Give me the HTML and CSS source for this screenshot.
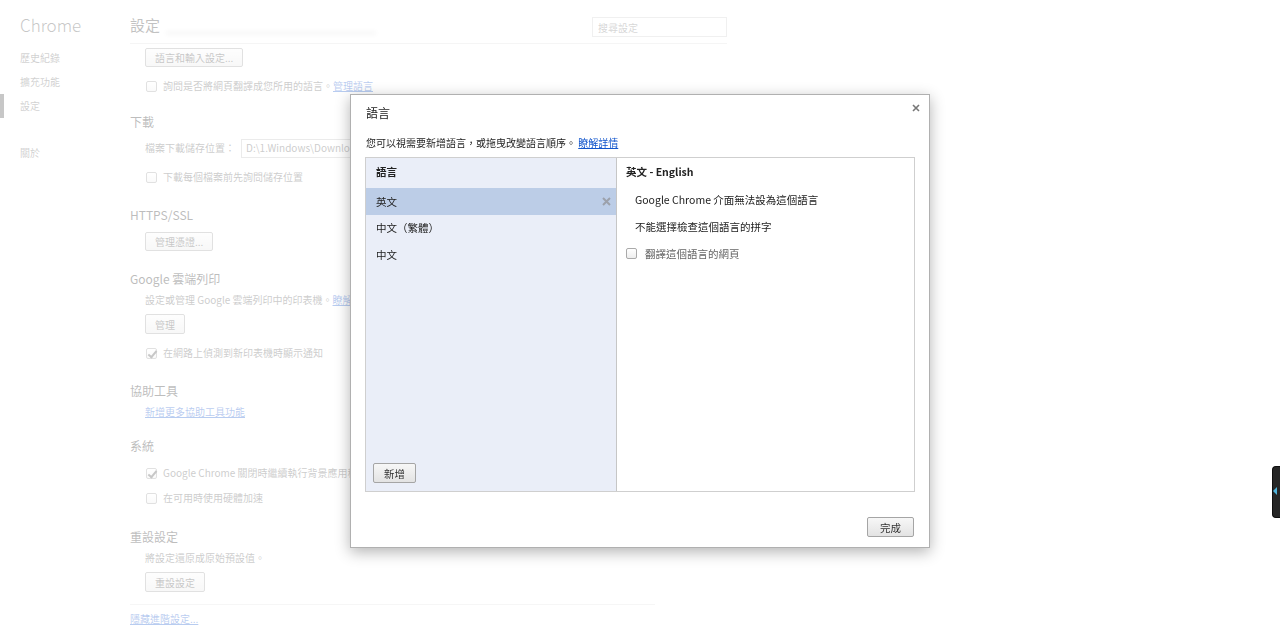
FILE: index.html
```html
<!DOCTYPE html>
<html lang="zh-Hant">
<head>
  <meta charset="UTF-8" />
  <title>設定 - 語言</title>
  <link rel="stylesheet" href="styles.css">
</head>
<body>
  <div class="page">
    <nav class="sidebar">
      <div class="brand">Chrome</div>
      <ul class="nav">
        <li>歷史紀錄</li>
        <li>擴充功能</li>
        <li class="active">設定</li>
        <li class="about">關於</li>
      </ul>
    </nav>

    <main class="main">
      <header class="main-header">
        <h1>設定</h1>
        <span class="header-fade"></span>
        <input class="search" type="text" placeholder="搜尋設定">
      </header>

      <section class="section first">
        <button class="btn">語言和輸入設定...</button>
        <div class="row after-btn"><span class="check"></span>詢問是否將網頁翻譯成您所用的語言。 <a href="#">管理語言</a></div>
      </section>

      <section class="section close-up">
        <h3>下載</h3>
        <div class="row path-row">檔案下載儲存位置： <input class="path" type="text" value="D:\1.Windows\Downloads"></div>
        <div class="row after-btn"><span class="check"></span>下載每個檔案前先詢問儲存位置</div>
      </section>

      <section class="section">
        <h3>HTTPS/SSL</h3>
        <button class="btn btn-loose">管理憑證...</button>
      </section>

      <section class="section">
        <h3>Google 雲端列印</h3>
        <div class="row">設定或管理 Google 雲端列印中的印表機。 <a href="#">瞭解詳情</a></div>
        <button class="btn btn-tight">管理</button>
        <div class="row after-btn"><span class="check checked"></span>在網路上偵測到新印表機時顯示通知</div>
      </section>

      <section class="section">
        <h3>協助工具</h3>
        <div class="row"><a href="#">新增更多協助工具功能</a></div>
      </section>

      <section class="section tight">
        <h3>系統</h3>
        <div class="row after-head"><span class="check checked"></span>Google Chrome 關閉時繼續執行背景應用程式</div>
        <div class="row next"><span class="check"></span>在可用時使用硬體加速</div>
      </section>

      <section class="section wide">
        <h3>重設設定</h3>
        <div class="row">將設定還原成原始預設值。</div>
        <button class="btn btn-tight">重設設定</button>
      </section>

      <div class="main-footer"><a href="#">隱藏進階設定...</a></div>
    </main>
  </div>

  <div class="overlay">
    <div class="dialog" role="dialog">
      <div class="dialog-title">語言</div>
      <button class="close" aria-label="關閉">
        <svg width="8" height="8" viewBox="0 0 8 8"><path d="M1 1L7 7M7 1L1 7" stroke="#777" stroke-width="1.6"/></svg>
      </button>
      <p class="dialog-desc">您可以視需要新增語言，或拖曳改變語言順序。 <a href="#">瞭解詳情</a></p>

      <div class="lang-box">
        <div class="lang-list">
          <div class="lang-head">語言</div>
          <div class="lang-item selected">英文<span class="remove">
            <svg width="9" height="9" viewBox="0 0 9 9"><path d="M1 1L8 8M8 1L1 8" stroke="#9ca1ab" stroke-width="2"/></svg>
          </span></div>
          <div class="lang-item">中文（繁體）</div>
          <div class="lang-item">中文</div>
          <button class="btn dlg-btn add-btn">新增</button>
        </div>
        <div class="lang-detail">
          <div class="detail-head">英文 - English</div>
          <div class="detail-row">Google Chrome 介面無法設為這個語言</div>
          <div class="detail-row">不能選擇檢查這個語言的拼字</div>
          <div class="detail-row opt"><span class="check dlg-check"></span>翻譯這個語言的網頁</div>
        </div>
      </div>

      <div class="dialog-footer">
        <button class="btn dlg-btn done-btn">完成</button>
      </div>
    </div>
  </div>

  <div class="edge-tab"></div>
</body>
</html>
```

FILE: styles.css
```css
* {
  margin: 0; padding: 0; box-sizing: border-box;
}
body {
  font-family: "Noto Sans CJK TC", "Noto Sans", sans-serif;
  font-size: 10px;
  color: #555;
  background: #fff;
  width: 1280px;
  height: 642px;
  overflow: hidden;
}
ul { list-style: none; }
a { color: #15c; }

/* settings page underneath */
.page { display: flex; }
.sidebar { width: 130px; padding-top: 14px; }
.brand {
  padding-left: 20px;
  font-size: 17px;
  line-height: 22px;
  font-weight: 300;
  color: #444;
}
.nav { margin-top: 10px; }
.nav li {
  padding-left: 20px;
  line-height: 24px;
  color: #666;
}
.nav li.active { box-shadow: inset 4px 0 0 #444; }
.nav li.about { margin-top: 23px; }

.main { width: 597px; padding-top: 14px; }
.main-header {
  display: flex;
  align-items: flex-start;
  height: 30px;
  border-bottom: 1px solid #ddd;
}
.main-header h1 {
  font-size: 15px;
  line-height: 22px;
  font-weight: 400;
  color: #333;
}
.header-fade {
  width: 210px;
  height: 4px;
  margin: 17px 0 0 6px;
  background: #e4e4e4;
  filter: blur(2px);
}
.search {
  margin: 3px 0 0 auto;
  width: 135px;
  height: 20px;
  border: 1px solid #ccc;
  padding: 0 5px;
  font: inherit;
  font-size: 10px;
  color: #555;
}
.search::placeholder { color: #777; }

.section { padding-left: 15px; margin-top: 18px; }
.section.first { margin-top: 4px; }
.section.close-up { margin-top: 16px; }
.section.tight { margin-top: 14px; }
.section.wide { margin-top: 19px; }
.section h3 {
  margin-left: -15px;
  font-size: 12px;
  line-height: 20px;
  font-weight: 400;
  color: #222;
}
.row {
  display: flex;
  align-items: center;
  line-height: 20px;
  margin-top: 1px;
  white-space: nowrap;
}
.row.after-btn { margin-top: 9px; }
.row.after-head { margin-top: 7px; }
.row.next { margin-top: 5px; }
.row.path-row { margin-top: 6px; }

.btn {
  display: block;
  height: 19px;
  padding: 0 9px;
  margin-top: 6px;
  border: 1px solid #9a9a9a;
  border-radius: 2px;
  background: linear-gradient(#fafafa, #e6e6e6);
  font: inherit;
  font-size: 10px;
  color: #444;
}
.section.first .btn { margin-top: 3px; }
.btn-loose { margin-top: 7px; }
.btn-tight { margin-top: 4px; height: 20px; }

.check {
  position: relative;
  width: 11px;
  height: 11px;
  margin: 0 6px 0 1px;
  border: 1px solid #999;
  border-radius: 2px;
  background: linear-gradient(#fff, #eee);
  flex: none;
}
.check.checked::after {
  content: "";
  position: absolute;
  left: 3px;
  top: 0;
  width: 3px;
  height: 7px;
  border: solid #444;
  border-width: 0 2px 2px 0;
  transform: rotate(40deg);
}
.path {
  margin-left: 6px;
  width: 200px;
  height: 19px;
  border: 1px solid #bbb;
  padding: 0 4px;
  font: inherit;
  font-size: 10px;
  color: #555;
}
.main-footer {
  width: 525px;
  margin-top: 12px;
  border-top: 1px solid #e2e2e2;
  padding-top: 4px;
  line-height: 20px;
}

/* modal layer */
.overlay {
  position: fixed;
  inset: 0;
  background: rgba(255, 255, 255, 0.7);
  display: flex;
  justify-content: center;
  align-items: center;
}
.dialog {
  position: relative;
  width: 580px;
  height: 454px;
  background: #fff;
  border: 1px solid #b0b0b0;
  box-shadow: 0 4px 14px rgba(0, 0, 0, 0.3);
  padding: 0 14px 10px;
  display: flex;
  flex-direction: column;
  color: #222;
  font-size: 10.5px;
}
.dialog-title {
  font-size: 12px;
  line-height: 35px;
  padding-left: 1px;
  color: #222;
}
.close {
  position: absolute;
  top: 8px;
  right: 8px;
  width: 10px;
  height: 10px;
  border: 0;
  background: none;
  display: flex;
  align-items: center;
  justify-content: center;
}
.dialog-desc {
  margin-top: 3px;
  padding-left: 1px;
  font-size: 10px;
  line-height: 20px;
}
.lang-box {
  margin-top: 4px;
  height: 335px;
  border: 1px solid #cfcfcf;
  display: flex;
}
.lang-list {
  width: 251px;
  background: #eaeef8;
  border-right: 1px solid #c6c6c6;
  display: flex;
  flex-direction: column;
}
.lang-head {
  height: 30px;
  line-height: 28px;
  padding-left: 10px;
  font-weight: 700;
}
.lang-item {
  display: flex;
  justify-content: space-between;
  align-items: center;
  height: 26.5px;
  padding: 0 5px 0 10px;
}
.lang-item.selected { background: #bccde7; }
.remove { display: flex; }
.dlg-btn {
  margin-top: 0;
  height: 20px;
  border-color: #a5a5a5;
  font-size: 10.5px;
  color: #333;
  background: linear-gradient(#f7f7f7, #e3e3e3);
}
.add-btn {
  align-self: flex-start;
  margin: auto 0 8px 7px;
  width: 43px;
  padding: 0;
}
.lang-detail { flex: 1; padding-left: 9px; }
.detail-head {
  height: 28px;
  line-height: 28px;
  font-weight: 700;
}
.detail-row {
  display: flex;
  align-items: center;
  height: 27px;
  padding-left: 9px;
}
.detail-row.opt { padding-left: 0; color: #666; }
.dlg-check { margin: 0 8px 0 0; border-color: #aaa; }
.dialog-footer {
  margin-top: auto;
  display: flex;
  justify-content: flex-end;
}
.done-btn { width: 47px; padding: 0; margin-right: 1px; }

/* dark handle on the right edge */
.edge-tab {
  position: fixed;
  right: 0;
  top: 466px;
  width: 8px;
  height: 52px;
  background: #262626;
  border: 1px solid #0e0e0e;
  border-right: 0;
  border-radius: 4px 0 0 4px;
  z-index: 2;
}
.edge-tab::before {
  content: "";
  position: absolute;
  left: 0;
  top: 20px;
  border: 4px solid transparent;
  border-right-color: #4fb4dc;
  border-left-width: 0;
}
```
